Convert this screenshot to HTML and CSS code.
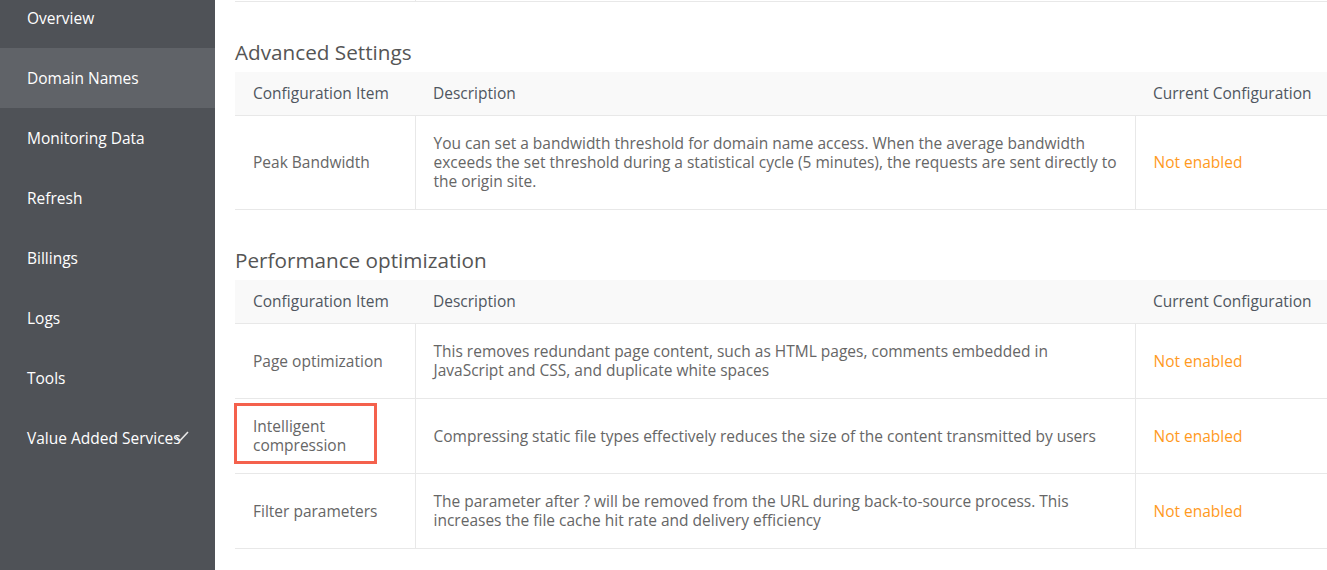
FILE: index.html
```html
<!DOCTYPE html>
<html>
<head>
    <title>Domain Names</title>
    <link rel="stylesheet" href="styles.css">
</head>
<body>
    <div class="layout">
        <ul class="menu">
            <li><a href="#">Overview</a></li>
            <li class="active"><a href="#">Domain Names</a></li>
            <li><a href="#">Monitoring Data</a></li>
            <li><a href="#">Refresh</a></li>
            <li><a href="#">Billings</a></li>
            <li><a href="#">Logs</a></li>
            <li><a href="#">Tools</a></li>
            <li><a href="#">Value Added Services<svg class="check" width="14" height="11" viewBox="0 0 14 11"><path d="M1 5.5 L5 9.5 L13 1" fill="none" stroke="#e6e6e6" stroke-width="1.6"/></svg></a></li>
        </ul>

        <div class="main">
            <!-- end of the previous table -->
            <div class="table-tail"><span></span></div>

            <h2>Advanced Settings</h2>
            <table class="config">
                <tr>
                    <th class="col-item">Configuration Item</th>
                    <th class="col-desc">Description</th>
                    <th>Current Configuration</th>
                </tr>
                <tr>
                    <td>Peak Bandwidth</td>
                    <td class="desc">You can set a bandwidth threshold for domain name access. When the average bandwidth exceeds the set threshold during a statistical cycle (5 minutes), the requests are sent directly to the origin site.</td>
                    <td class="status">Not enabled</td>
                </tr>
            </table>

            <h2>Performance optimization</h2>
            <table class="config">
                <tr>
                    <th class="col-item">Configuration Item</th>
                    <th class="col-desc">Description</th>
                    <th>Current Configuration</th>
                </tr>
                <tr>
                    <td>Page optimization</td>
                    <td class="desc">This removes redundant page content, such as HTML pages, comments embedded in JavaScript and CSS, and duplicate white spaces</td>
                    <td class="status">Not enabled</td>
                </tr>
                <tr>
                    <td><div class="marked">Intelligent compression<span class="highlight"></span></div></td>
                    <td class="desc">Compressing static file types effectively reduces the size of the content transmitted by users</td>
                    <td class="status">Not enabled</td>
                </tr>
                <tr>
                    <td>Filter parameters</td>
                    <td class="desc">The parameter after ? will be removed from the URL during back-to-source process. This increases the file cache hit rate and delivery efficiency</td>
                    <td class="status">Not enabled</td>
                </tr>
            </table>
        </div>
    </div>
</body>
</html>
```
FILE: styles.css
```css
body {
    font-family: "Open Sans", "Noto Sans", sans-serif;
    margin: 0;
    padding: 0;
    background-color: #fff;
    overflow: hidden;
}

.layout {
    display: flex;
    height: 570px;
}

/* sidebar */
.menu {
    list-style-type: none;
    margin: -12px 0 0 0;
    padding: 0;
    width: 215px;
    flex-shrink: 0;
    background-color: #4f5257;
}

.menu li a {
    display: block;
    height: 60px;
    line-height: 60px;
    padding-left: 27px;
    color: #fff;
    font-size: 15.5px;
    text-decoration: none;
    white-space: nowrap;
}

.menu li.active a {
    background-color: #606368;
}

.menu .check {
    margin-left: -6px;
    vertical-align: 2px;
}

/* content */
.main {
    flex: 1;
    padding-left: 20px;
    min-width: 0;
}

.table-tail {
    height: 1px;
    border-bottom: 1px solid #e8e8e8;
}

.table-tail span {
    display: block;
    width: 180px;
    height: 1px;
    border-right: 1px solid #e8e8e8;
}

h2 {
    font-size: 20.7px;
    font-weight: normal;
    color: #555;
    line-height: 24px;
    margin: 38px 0 8px 0;
}

.config {
    width: 100%;
    table-layout: fixed;
    border-collapse: collapse;
    font-size: 15.5px;
    line-height: 19px;
    color: #666;
}

.config th {
    text-align: left;
    font-weight: normal;
    color: #4f5660;
    background-color: #f9f9f9;
    padding: 12px 18px;
    border-bottom: 1px solid #e8e8e8;
    white-space: nowrap;
}

.config .col-item {
    width: 144px;
}

.config .col-desc {
    width: 684px;
}

.config td {
    padding: 18px 18px;
    border-bottom: 1px solid #e8e8e8;
    border-right: 1px solid #e8e8e8;
    vertical-align: middle;
}

.config td.desc {
    padding-right: 15px;
}

.config td:last-child {
    border-right: none;
}

.config .status {
    color: #ff9a1e;
}

.marked {
    position: relative;
}

.highlight {
    position: absolute;
    left: -19px;
    top: -14px;
    width: 137px;
    height: 55px;
    border: 3px solid #f4614d;
}
```
